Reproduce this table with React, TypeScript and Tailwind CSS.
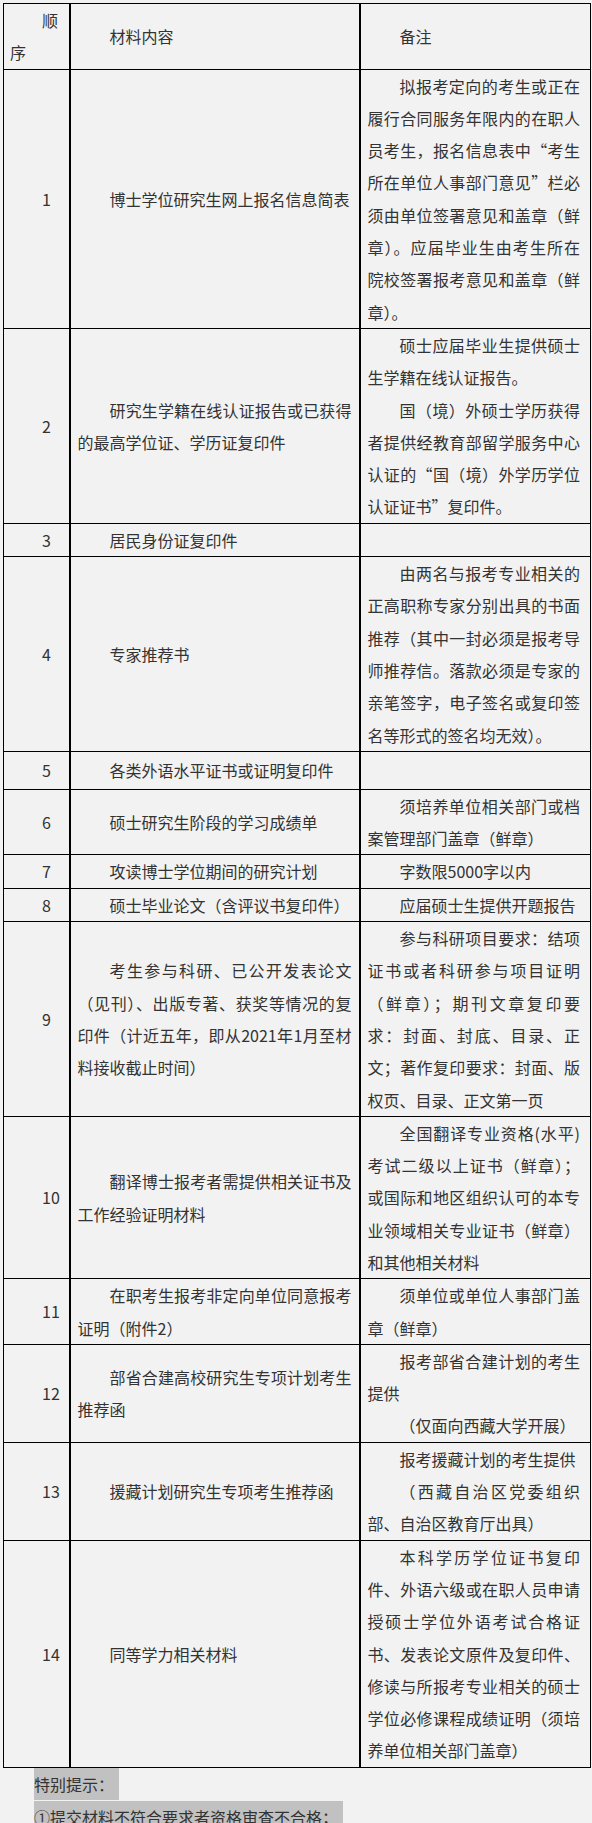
import React from "react";

interface MaterialRow {
  no: string;
  item: string;
  notes: string[];
  tall?: boolean;
}

const rows: MaterialRow[] = [
  {
    no: "1",
    item: "博士学位研究生网上报名信息简表",
    notes: [
      "拟报考定向的考生或正在履行合同服务年限内的在职人员考生，报名信息表中“考生所在单位人事部门意见”栏必须由单位签署意见和盖章（鲜章）。应届毕业生由考生所在院校签署报考意见和盖章（鲜章）。",
    ],
  },
  {
    no: "2",
    item: "研究生学籍在线认证报告或已获得的最高学位证、学历证复印件",
    notes: [
      "硕士应届毕业生提供硕士生学籍在线认证报告。",
      "国（境）外硕士学历获得者提供经教育部留学服务中心认证的“国（境）外学历学位认证证书”复印件。",
    ],
  },
  { no: "3", item: "居民身份证复印件", notes: [] },
  {
    no: "4",
    item: "专家推荐书",
    notes: [
      "由两名与报考专业相关的正高职称专家分别出具的书面推荐（其中一封必须是报考导师推荐信。落款必须是专家的亲笔签字，电子签名或复印签名等形式的签名均无效）。",
    ],
  },
  { no: "5", item: "各类外语水平证书或证明复印件", notes: [], tall: true },
  {
    no: "6",
    item: "硕士研究生阶段的学习成绩单",
    notes: ["须培养单位相关部门或档案管理部门盖章（鲜章）"],
  },
  { no: "7", item: "攻读博士学位期间的研究计划", notes: ["字数限5000字以内"] },
  { no: "8", item: "硕士毕业论文（含评议书复印件）", notes: ["应届硕士生提供开题报告"] },
  {
    no: "9",
    item: "考生参与科研、已公开发表论文（见刊）、出版专著、获奖等情况的复印件（计近五年，即从2021年1月至材料接收截止时间）",
    notes: [
      "参与科研项目要求：结项证书或者科研参与项目证明（鲜章）；期刊文章复印要求：封面、封底、目录、正文；著作复印要求：封面、版权页、目录、正文第一页",
    ],
  },
  {
    no: "10",
    item: "翻译博士报考者需提供相关证书及工作经验证明材料",
    notes: [
      "全国翻译专业资格(水平)考试二级以上证书（鲜章）；或国际和地区组织认可的本专业领域相关专业证书（鲜章）和其他相关材料",
    ],
  },
  {
    no: "11",
    item: "在职考生报考非定向单位同意报考证明（附件2）",
    notes: ["须单位或单位人事部门盖章（鲜章）"],
  },
  {
    no: "12",
    item: "部省合建高校研究生专项计划考生推荐函",
    notes: ["报考部省合建计划的考生提供", "（仅面向西藏大学开展）"],
  },
  {
    no: "13",
    item: "援藏计划研究生专项考生推荐函",
    notes: ["报考援藏计划的考生提供", "（西藏自治区党委组织部、自治区教育厅出具）"],
  },
  {
    no: "14",
    item: "同等学力相关材料",
    notes: [
      "本科学历学位证书复印件、外语六级或在职人员申请授硕士学位外语考试合格证书、发表论文原件及复印件、修读与所报考专业相关的硕士学位必修课程成绩证明（须培养单位相关部门盖章）",
    ],
  },
];

// shared cell styles
const cellBase = "border border-black align-middle py-0 text-justify";
const noCell = `${cellBase} pl-[6px] pr-[2px]`;
const itemCell = `${cellBase} border-x-2 pl-[7px] pr-[7px]`;
const noteCell = `${cellBase} pl-[7px] pr-[10px]`;

export default function App() {
  return (
    <div
      lang="zh-CN"
      className="min-h-screen bg-[#f2f2f2] pt-[3px] pl-[3px] font-['Noto_Sans_CJK_SC',sans-serif] text-[16px] leading-[32.3px] text-[#333]"
    >
      <table className="table-fixed border-collapse border border-black w-[587px]">
        <colgroup>
          <col className="w-[66px]" />
          <col className="w-[290px]" />
          <col className="w-[231px]" />
        </colgroup>
        <thead>
          <tr>
            <th className={`${noCell} font-normal text-left`}>
              <p className="indent-8">顺序</p>
            </th>
            <th className={`${itemCell} font-normal text-left`}>
              <p className="indent-8">材料内容</p>
            </th>
            <th className={`${noteCell} font-normal text-left`}>
              <p className="indent-8">备注</p>
            </th>
          </tr>
        </thead>
        <tbody>
          {rows.map((row) => (
            <tr key={row.no} className={row.tall ? "h-[38px]" : undefined}>
              <td className={noCell}>
                <p className="indent-8">{row.no}</p>
              </td>
              <td className={itemCell}>
                <p className="indent-8">{row.item}</p>
              </td>
              <td className={noteCell}>
                {row.notes.map((note, i) => (
                  <p key={i} className="indent-8">
                    {note}
                  </p>
                ))}
              </td>
            </tr>
          ))}
        </tbody>
      </table>

      {/* Notice below the table */}
      <div className="pl-[31px] leading-[33px]">
        <p>
          <span className="inline-block bg-[#c1c1c1] pr-[5px] leading-8">特别提示：</span>
        </p>
        <p>
          <span className="inline-block bg-[#c1c1c1] pr-[5px] leading-8">
            ①提交材料不符合要求者资格审查不合格；
          </span>
        </p>
      </div>
    </div>
  );
}
